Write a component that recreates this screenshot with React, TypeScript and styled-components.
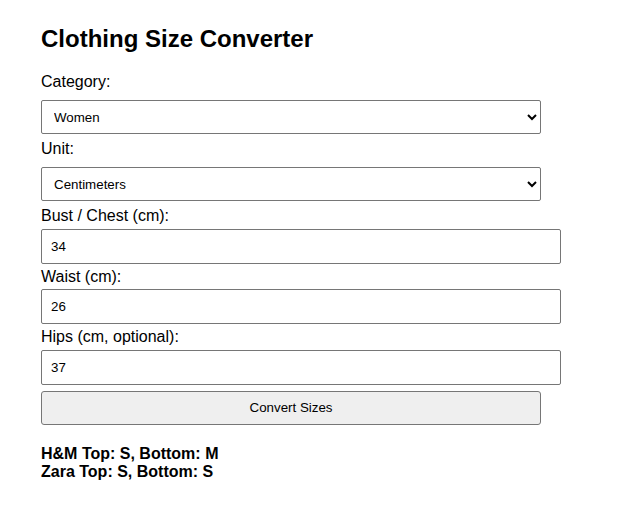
import { useState } from "react";
import styled, { createGlobalStyle } from "styled-components";

const GlobalStyle = createGlobalStyle`
  html, body { margin: 0; padding: 0; background: #fff; }
  body { font-family: "Liberation Sans", Arial, sans-serif; color: #000; }
`;

type Result = { brand: string; top: string; bottom: string };

const results: Result[] = [
  { brand: "H&M", top: "S", bottom: "M" },
  { brand: "Zara", top: "S", bottom: "S" },
];

export default function App() {
  const [category, setCategory] = useState("women");
  const [unit, setUnit] = useState("cm");
  const [bust, setBust] = useState("34");
  const [waist, setWaist] = useState("26");
  const [hips, setHips] = useState("37");

  return (
    <>
      <GlobalStyle />
      <Page>
        <Title>Clothing Size Converter</Title>
        <Form onSubmit={(e) => e.preventDefault()}>
          <Label htmlFor="category">Category:</Label>
          <Select id="category" value={category} onChange={(e) => setCategory(e.target.value)}>
            <option value="women">Women</option>
            <option value="men">Men</option>
            <option value="kids">Kids</option>
          </Select>

          <Label htmlFor="unit">Unit:</Label>
          <Select id="unit" value={unit} onChange={(e) => setUnit(e.target.value)}>
            <option value="cm">Centimeters</option>
            <option value="in">Inches</option>
          </Select>

          <Label htmlFor="bust">Bust / Chest (cm):</Label>
          <Input id="bust" type="number" value={bust} onChange={(e) => setBust(e.target.value)} />

          <Label htmlFor="waist">Waist (cm):</Label>
          <Input id="waist" type="number" value={waist} onChange={(e) => setWaist(e.target.value)} />

          <Label htmlFor="hips">Hips (cm, optional):</Label>
          <Input id="hips" type="number" value={hips} onChange={(e) => setHips(e.target.value)} />

          <Button type="submit">Convert Sizes</Button>
        </Form>

        <Results>
          {results.map((r) => (
            <ResultLine key={r.brand}>
              {r.brand} Top: {r.top}, Bottom: {r.bottom}
            </ResultLine>
          ))}
        </Results>
      </Page>
    </>
  );
}

/* ===== styled ===== */
const Page = styled.div`
  padding: 25px 41px 20px;
  width: 500px;
`;

const Title = styled.h2`
  margin: 0 0 20px;
  font-size: 24px;
  font-weight: 700;
  line-height: 27.6px;
`;

const Form = styled.form`
  display: flex;
  flex-direction: column;
  align-items: flex-start;
`;

const Label = styled.label`
  display: block;
  font-size: 16px;
  line-height: 18.4px;
`;

const Select = styled.select`
  box-sizing: border-box;
  width: 500px;
  height: 34px;
  margin: 9px 0 6px;
  padding: 0 8px;
  font-family: "Liberation Sans", Arial, sans-serif;
  font-size: 13.33px;
  color: #000;
  background: #fff;
  border: 1px solid #767676;
  border-radius: 2px;
`;

const Input = styled.input`
  box-sizing: border-box;
  width: 520px;
  height: 35px;
  margin: 3px 0 4px;
  padding: 0 9px;
  font-family: "Liberation Sans", Arial, sans-serif;
  font-size: 13.33px;
  color: #000;
  background: #fff;
  border: 1px solid #767676;
  border-radius: 2px;
  -moz-appearance: textfield;
  &::-webkit-outer-spin-button,
  &::-webkit-inner-spin-button { -webkit-appearance: none; margin: 0; }
`;

const Button = styled.button`
  box-sizing: border-box;
  width: 500px;
  height: 34px;
  margin-top: 2px;
  font-family: "Liberation Sans", Arial, sans-serif;
  font-size: 13.33px;
  color: #000;
  background: #efefef;
  border: 1px solid #767676;
  border-radius: 3px;
  cursor: pointer;
`;

const Results = styled.div`
  margin-top: 20px;
`;

const ResultLine = styled.div`
  font-size: 16px;
  font-weight: 700;
  line-height: 18.4px;
`;
